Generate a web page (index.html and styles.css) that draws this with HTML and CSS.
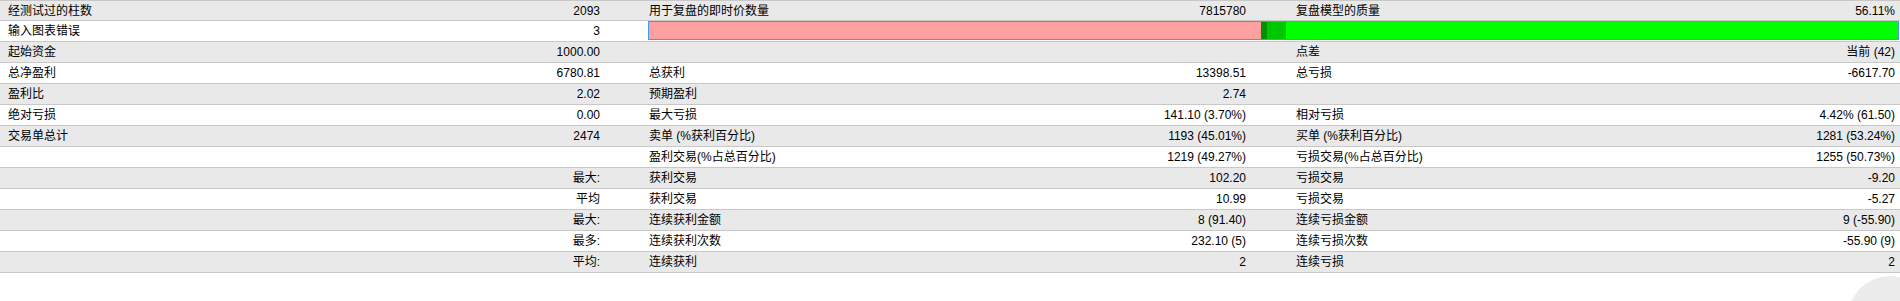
FILE: index.html
```html
<!DOCTYPE html>
<html lang="zh">
<head>
<meta charset="utf-8">
<title>测试报告</title>
<link rel="stylesheet" href="styles.css">
</head>
<body>
<div class="page">
<div class="report">
  <div class="row gray first">
    <div class="lab l1">经测试过的柱数</div><div class="val v1">2093</div>
    <div class="lab l2">用于复盘的即时价数量</div><div class="val v2">7815780</div>
    <div class="lab l3">复盘模型的质量</div><div class="val v3">56.11%</div>
  </div>
  <div class="row">
    <div class="lab l1">输入图表错误</div><div class="val v1">3</div>
    <div class="bar-cell">
      <div class="bar">
        <div class="seg pink" style="width:612px"></div>
        <div class="seg dark" style="width:6px"></div>
        <div class="seg mid" style="width:19px"></div>
        <div class="seg lime"></div>
      </div>
    </div>
  </div>
  <div class="row gray">
    <div class="lab l1">起始资金</div><div class="val v1">1000.00</div>
    <div class="lab l2"></div><div class="val v2"></div>
    <div class="lab l3">点差</div><div class="val v3">当前 (42)</div>
  </div>
  <div class="row">
    <div class="lab l1">总净盈利</div><div class="val v1">6780.81</div>
    <div class="lab l2">总获利</div><div class="val v2">13398.51</div>
    <div class="lab l3">总亏损</div><div class="val v3">-6617.70</div>
  </div>
  <div class="row gray">
    <div class="lab l1">盈利比</div><div class="val v1">2.02</div>
    <div class="lab l2">预期盈利</div><div class="val v2">2.74</div>
    <div class="lab l3"></div><div class="val v3"></div>
  </div>
  <div class="row">
    <div class="lab l1">绝对亏损</div><div class="val v1">0.00</div>
    <div class="lab l2">最大亏损</div><div class="val v2">141.10 (3.70%)</div>
    <div class="lab l3">相对亏损</div><div class="val v3">4.42% (61.50)</div>
  </div>
  <div class="row gray">
    <div class="lab l1">交易单总计</div><div class="val v1">2474</div>
    <div class="lab l2">卖单 (%获利百分比)</div><div class="val v2">1193 (45.01%)</div>
    <div class="lab l3">买单 (%获利百分比)</div><div class="val v3">1281 (53.24%)</div>
  </div>
  <div class="row">
    <div class="lab l1"></div><div class="val v1"></div>
    <div class="lab l2">盈利交易(%占总百分比)</div><div class="val v2">1219 (49.27%)</div>
    <div class="lab l3">亏损交易(%占总百分比)</div><div class="val v3">1255 (50.73%)</div>
  </div>
  <div class="row gray">
    <div class="lab l1"></div><div class="val v1">最大:</div>
    <div class="lab l2">获利交易</div><div class="val v2">102.20</div>
    <div class="lab l3">亏损交易</div><div class="val v3">-9.20</div>
  </div>
  <div class="row">
    <div class="lab l1"></div><div class="val v1">平均</div>
    <div class="lab l2">获利交易</div><div class="val v2">10.99</div>
    <div class="lab l3">亏损交易</div><div class="val v3">-5.27</div>
  </div>
  <div class="row gray">
    <div class="lab l1"></div><div class="val v1">最大:</div>
    <div class="lab l2">连续获利金额</div><div class="val v2">8 (91.40)</div>
    <div class="lab l3">连续亏损金额</div><div class="val v3">9 (-55.90)</div>
  </div>
  <div class="row">
    <div class="lab l1"></div><div class="val v1">最多:</div>
    <div class="lab l2">连续获利次数</div><div class="val v2">232.10 (5)</div>
    <div class="lab l3">连续亏损次数</div><div class="val v3">-55.90 (9)</div>
  </div>
  <div class="row gray">
    <div class="lab l1"></div><div class="val v1">平均:</div>
    <div class="lab l2">连续获利</div><div class="val v2">2</div>
    <div class="lab l3">连续亏损</div><div class="val v3">2</div>
  </div>
</div>
<div class="float-btn"></div>
</div>
</body>
</html>
```

FILE: styles.css
```css
html, body {
  margin: 0;
  padding: 0;
  background: #ffffff;
  overflow: hidden;
}

body {
  font-family: "Liberation Sans", "Noto Sans CJK SC", sans-serif;
  font-size: 12px;
  color: #000000;
}

.page {
  position: relative;
  width: 1900px;
  height: 301px;
  overflow: hidden;
}

.report {
  border-top: 1px solid #c8c8c8;
}

.row {
  display: grid;
  grid-template-columns: 300px 346px 300px 347px 300px 307px;
  height: 20px;
  line-height: 20px;
  border-bottom: 1px solid #c8c8c8;
  background: #ffffff;
}

.row.gray {
  background: #e9e9e9;
}

.row.first {
  height: 19px;
}

.lab, .val {
  white-space: nowrap;
  overflow: hidden;
}

.lab {
  text-align: left;
}

.val {
  text-align: right;
}

.l1 { padding-left: 8px; }
.l2 { padding-left: 3px; }
.l3 { padding-left: 3px; }

.v1 { padding-right: 46px; }
.v2 { padding-right: 47px; }
.v3 { padding-right: 5px; }

.bar-cell {
  grid-column: 3 / 7;
  padding: 0 1px 0 2px;
}

.bar {
  display: flex;
  height: 19px;
  box-sizing: border-box;
  border: 1px solid #3d9bf2;
}

.seg {
  height: 100%;
}

.pink { background: #ffa0a0; }
.dark { background: #009000; }
.mid { background: #00c800; }
.lime { background: #00ff00; flex: 1; }

.float-btn {
  position: absolute;
  left: 1848px;
  top: 276px;
  width: 84px;
  height: 84px;
  border-radius: 50%;
  background: #ececec;
}
```
